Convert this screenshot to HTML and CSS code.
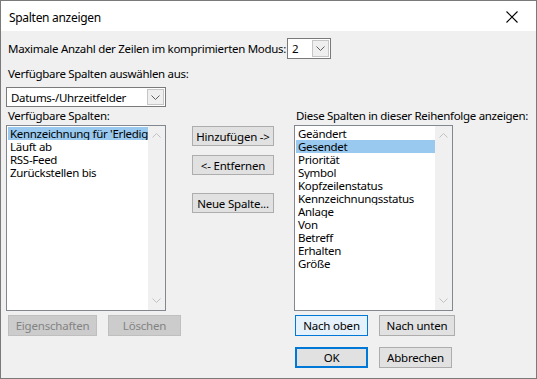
FILE: index.html
```html
<!DOCTYPE html>
<html lang="de">
<head>
    <meta charset="UTF-8">
    <title>Spalten anzeigen</title>
    <link rel="stylesheet" href="styles.css">
</head>
<body>
<div class="dialog">
    <div class="titlebar">
        <span class="title">Spalten anzeigen</span>
        <svg class="close" width="12" height="12" viewBox="0 0 12 12">
            <path d="M0.5 0.5 L11.5 11.5 M11.5 0.5 L0.5 11.5" stroke="#000" stroke-width="1.1" fill="none"/>
        </svg>
    </div>
    <div class="content">
        <!-- compact mode rows -->
        <div class="row-max">
            <span>Maximale Anzahl der Zeilen im komprimierten Modus:</span>
            <div class="combo combo-small">
                <span class="combo-text">2</span>
                <span class="combo-btn"><svg width="9" height="5" viewBox="0 0 9 5"><path d="M0.5 0.5 L4.5 4.5 L8.5 0.5" stroke="#606060" fill="none"/></svg></span>
            </div>
        </div>
        <div class="label-select">Verfügbare Spalten auswählen aus:</div>
        <div class="combo combo-wide">
            <span class="combo-text">Datums-/Uhrzeitfelder</span>
            <span class="combo-btn"><svg width="9" height="5" viewBox="0 0 9 5"><path d="M0.5 0.5 L4.5 4.5 L8.5 0.5" stroke="#606060" fill="none"/></svg></span>
        </div>

        <div class="columns">
            <!-- available columns -->
            <div class="col col-left">
                <div class="col-label">Verfügbare Spalten:</div>
                <div class="listbox">
                    <ul class="items">
                        <li class="selected">Kennzeichnung für 'Erledigt am'</li>
                        <li>Läuft ab</li>
                        <li>RSS-Feed</li>
                        <li>Zurückstellen bis</li>
                    </ul>
                    <div class="scrollbar">
                        <svg width="9" height="5" viewBox="0 0 9 5"><path d="M0.5 4.5 L4.5 0.5 L8.5 4.5" stroke="#c2c2c2" fill="none"/></svg>
                        <svg width="9" height="5" viewBox="0 0 9 5"><path d="M0.5 0.5 L4.5 4.5 L8.5 0.5" stroke="#c2c2c2" fill="none"/></svg>
                    </div>
                </div>
                <div class="btn-row">
                    <button class="btn disabled btn-props">Eigenschaften</button>
                    <button class="btn disabled btn-del">Löschen</button>
                </div>
            </div>

            <!-- middle buttons -->
            <div class="col col-mid">
                <button class="btn btn-mid">Hinzufügen -&gt;</button>
                <button class="btn btn-mid">&lt;- Entfernen</button>
                <button class="btn btn-mid btn-new">Neue Spalte...</button>
            </div>

            <!-- shown columns -->
            <div class="col col-right">
                <div class="col-label">Diese Spalten in dieser Reihenfolge anzeigen:</div>
                <div class="listbox listbox-right">
                    <ul class="items">
                        <li>Geändert</li>
                        <li class="selected">Gesendet</li>
                        <li>Priorität</li>
                        <li>Symbol</li>
                        <li>Kopfzeilenstatus</li>
                        <li>Kennzeichnungsstatus</li>
                        <li>Anlage</li>
                        <li>Von</li>
                        <li>Betreff</li>
                        <li>Erhalten</li>
                        <li>Größe</li>
                    </ul>
                    <div class="scrollbar">
                        <svg width="9" height="5" viewBox="0 0 9 5"><path d="M0.5 4.5 L4.5 0.5 L8.5 4.5" stroke="#c2c2c2" fill="none"/></svg>
                        <svg width="9" height="5" viewBox="0 0 9 5"><path d="M0.5 0.5 L4.5 4.5 L8.5 0.5" stroke="#c2c2c2" fill="none"/></svg>
                    </div>
                </div>
                <div class="btn-row">
                    <button class="btn focus">Nach oben</button>
                    <button class="btn btn-down">Nach unten</button>
                </div>
                <div class="btn-row btn-row-final">
                    <button class="btn default">OK</button>
                    <button class="btn">Abbrechen</button>
                </div>
            </div>
        </div>
    </div>
</div>
</body>
</html>
```

FILE: styles.css
```css
* { box-sizing: border-box; }
body { margin: 0; font-family: "Noto Sans", sans-serif; font-size: 11.5px; letter-spacing: -0.3px; color: #000; background: #f0f0f0; }
.dialog { width: 537px; height: 379px; border: 1px solid #7a7a7a; background: #f0f0f0; overflow: hidden; }
.titlebar { height: 30px; background: #fff; display: flex; align-items: center; justify-content: space-between; padding: 2px 18px 0 8px; }
.title { font-size: 12px; }
.close { display: block; }
.content { padding: 6px 0 0 5px; }

.row-max { display: flex; align-items: center; gap: 1px; padding-left: 2px; height: 22px; }
.combo { display: flex; align-items: center; justify-content: space-between; background: #fff; border: 1px solid #7a7a7a; height: 21px; padding: 1px 1px 1px 4px; }
.combo-small { width: 44px; }
.combo-wide { width: 160px; height: 20px; margin-top: 3px; }
.combo-btn { width: 17px; height: 100%; border: 1px solid #c6c6c6; background: #efefef; display: flex; align-items: center; justify-content: center; }
.label-select { padding-left: 2px; margin-top: 5px; height: 20px; line-height: 20px; }

.columns { display: flex; margin-top: 0; }
.col-left { width: 160px; }
.col-mid { width: 128px; display: flex; flex-direction: column; align-items: flex-start; padding: 19px 0 0 26px; }
.col-right { width: 242px; }
.col-label { height: 18px; line-height: 18px; padding-left: 2px; white-space: nowrap; }

.listbox { display: flex; height: 186px; background: #fff; border: 1px solid #828790; }
.listbox-right { width: 159px; }
.items { list-style: none; margin: 0; padding: 1px 0 0 1px; flex: 1; overflow: hidden; min-width: 0; }
.items li { height: 13px; line-height: 13px; padding-left: 2px; white-space: nowrap; overflow: hidden; }
.items li.selected { background: #99c9ef; }
.scrollbar { width: 17px; flex-shrink: 0; background: #f0f0f0; display: flex; flex-direction: column; justify-content: space-between; align-items: center; padding: 7px 0 7px; }

.btn { font-family: inherit; font-size: 11.5px; letter-spacing: -0.2px; color: #000; background: #e1e1e1; border: 1px solid #adadad; height: 21px; padding: 0; margin: 0; flex-shrink: 0; }
.btn.disabled { background: #cccccc; border-color: #bfbfbf; color: #838383; }
.btn.focus { background: #e5f1fb; border-color: #0078d7; }
.btn.default { border: 2px solid #0078d7; }
.btn-row { display: flex; gap: 11px; margin-top: 4px; }
.btn-row .btn { width: 73px; }
.col-left .btn-row { padding-left: 2px; }
.col-left .btn-props { width: 89px; }
.col-right .btn-row { padding-left: 1px; }
.col-right .btn-down { width: 76px; }
.btn-row-final { margin-top: 11px; }
.btn-mid { width: 82px; height: 20px; margin-bottom: 9px; }
.btn-new { margin-top: 9px; }
```
